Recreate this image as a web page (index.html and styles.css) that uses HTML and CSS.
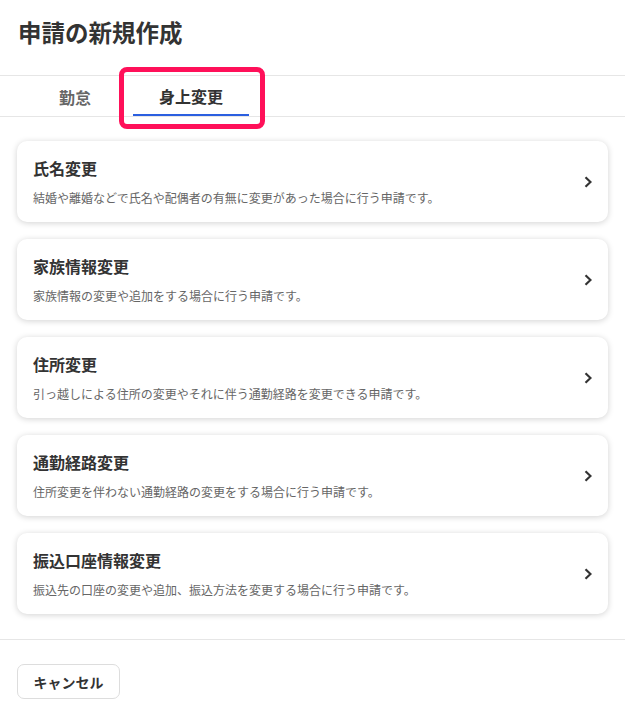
FILE: index.html
```html
<!DOCTYPE html>
<html lang="ja">
<head>
  <meta charset="UTF-8">
  <title>申請の新規作成</title>
  <meta name="viewport" content="width=device-width,initial-scale=1">
  <link rel="stylesheet" href="styles.css">
</head>
<body>
  <div class="page">
    <h1 class="title">申請の新規作成</h1>

    <div class="tabs">
      <div class="tab">勤怠</div>
      <div class="tab active">身上変更</div>
      <div class="mark"></div>
    </div>

    <div class="list">
      <div class="card">
        <div class="card-body">
          <div class="card-title">氏名変更</div>
          <div class="card-desc">結婚や離婚などで氏名や配偶者の有無に変更があった場合に行う申請です。</div>
        </div>
        <svg class="chev" width="8" height="12" viewBox="0 0 8 12"><path d="M1.5 1.2l5 4.8-5 4.8" fill="none" stroke="#333" stroke-width="2.2"/></svg>
      </div>
      <div class="card">
        <div class="card-body">
          <div class="card-title">家族情報変更</div>
          <div class="card-desc">家族情報の変更や追加をする場合に行う申請です。</div>
        </div>
        <svg class="chev" width="8" height="12" viewBox="0 0 8 12"><path d="M1.5 1.2l5 4.8-5 4.8" fill="none" stroke="#333" stroke-width="2.2"/></svg>
      </div>
      <div class="card">
        <div class="card-body">
          <div class="card-title">住所変更</div>
          <div class="card-desc">引っ越しによる住所の変更やそれに伴う通勤経路を変更できる申請です。</div>
        </div>
        <svg class="chev" width="8" height="12" viewBox="0 0 8 12"><path d="M1.5 1.2l5 4.8-5 4.8" fill="none" stroke="#333" stroke-width="2.2"/></svg>
      </div>
      <div class="card">
        <div class="card-body">
          <div class="card-title">通勤経路変更</div>
          <div class="card-desc">住所変更を伴わない通勤経路の変更をする場合に行う申請です。</div>
        </div>
        <svg class="chev" width="8" height="12" viewBox="0 0 8 12"><path d="M1.5 1.2l5 4.8-5 4.8" fill="none" stroke="#333" stroke-width="2.2"/></svg>
      </div>
      <div class="card">
        <div class="card-body">
          <div class="card-title">振込口座情報変更</div>
          <div class="card-desc">振込先の口座の変更や追加、振込方法を変更する場合に行う申請です。</div>
        </div>
        <svg class="chev" width="8" height="12" viewBox="0 0 8 12"><path d="M1.5 1.2l5 4.8-5 4.8" fill="none" stroke="#333" stroke-width="2.2"/></svg>
      </div>
    </div>

    <div class="footer">
      <button class="cancel">キャンセル</button>
    </div>
  </div>
</body>
</html>
```

FILE: styles.css
```css
body { margin: 0; background: #fff; color: #333; font-family: "Noto Sans CJK JP", "Noto Sans", sans-serif; }
.page { width: 625px; }
.title { margin: 0; padding: 17px 18px 0; height: 57px; box-sizing: border-box; font-size: 23.5px; line-height: 30px; font-weight: bold; color: #333; }
.tabs { position: relative; display: flex; padding: 0 17px; height: 40px; border-top: 1px solid #e6e6e6; border-bottom: 1px solid #e6e6e6; margin-top: 18px; }
.tab { width: 116px; display: flex; align-items: center; justify-content: center; font-size: 16px; font-weight: bold; color: #666; box-sizing: border-box; padding-top: 2px; }
.tab.active { color: #333; border-bottom: 2px solid #2b5fe0; }
.mark { position: absolute; left: 119px; top: -9px; width: 146px; height: 62px; box-sizing: border-box; border: 5px solid #ff1059; border-radius: 8px; }
.list { display: flex; flex-direction: column; gap: 17px; padding: 24px 17px 25px; border-bottom: 1px solid #e6e6e6; }
.card { display: flex; align-items: center; height: 81px; box-sizing: border-box; padding: 0 16px; background: #fff; border-radius: 10px; box-shadow: 0 1px 6px rgba(0,0,0,0.18); }
.card-body { flex: 1; }
.card-title { font-size: 16px; font-weight: bold; line-height: 20px; color: #333; }
.card-desc { margin-top: 12px; font-size: 12px; line-height: 16px; color: #666; }
.chev { flex: none; }
.footer { padding: 24px 17px; }
.cancel { width: 103px; height: 35px; background: #fff; border: 1px solid #ddd; border-radius: 7px; font-family: inherit; font-size: 14px; font-weight: bold; color: #333; cursor: pointer; }
```
